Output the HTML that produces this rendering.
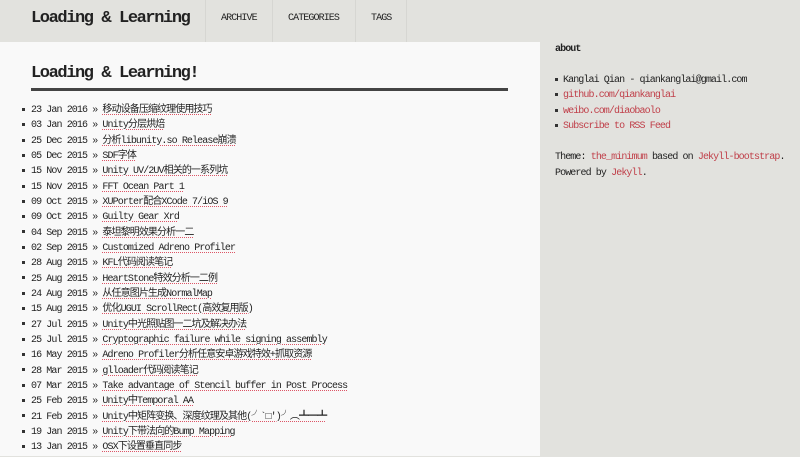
<!DOCTYPE html>
<html><head><meta charset="utf-8"><style>
body{margin:0;width:800px;height:456px;overflow:hidden;background:#e2e2de;font-family:"Liberation Mono","Noto Sans CJK SC",monospace;color:#222;font-size:10px;letter-spacing:-0.9px}
.hdr{position:absolute;left:0;top:0;width:800px;height:42px}
.brand{position:absolute;left:31px;top:9px;font-size:17px;letter-spacing:-1.4px;font-weight:bold;color:#222}
.nav{position:absolute;top:0;height:42px;border-left:1px solid #d6d6d2;}
.nav span{position:absolute;top:13px;font-size:10px}
.main{position:absolute;left:0;top:42px;width:540px;height:414px;background:#f9f9f9}
h1{position:absolute;left:31px;top:22px;margin:0;font-size:17px;letter-spacing:-1.4px;font-weight:bold}
.rule{position:absolute;left:31px;top:46px;width:477px;height:3px;background:#444}
ul{list-style:none;margin:0;padding:0}
.posts{position:absolute;left:22px;top:62px}
.posts li{height:15.33px;line-height:13px;white-space:nowrap}
li:before{content:"";display:inline-block;width:3px;height:3px;background:#333;vertical-align:middle;margin-right:6px}
.posts a{color:#222;text-decoration:underline dotted #d56;text-underline-offset:2px}
.side{position:absolute;left:555px;top:0}
.side b{position:absolute;top:44px;left:0;font-size:10px}
.side ul{position:absolute;top:74px;left:0}
.side li{height:15.33px;line-height:13px;white-space:nowrap}
.side li:before{margin-right:5px}
.r{color:#c0404a}
.theme{position:absolute;top:150px;left:0;white-space:nowrap;line-height:15.5px}
</style></head><body>
<div class="hdr">
<div class="brand">Loading &amp; Learning</div>
<div class="nav" style="left:205px;width:66px"><span style="left:15px">ARCHIVE</span></div>
<div class="nav" style="left:272px;width:83px"><span style="left:15px">CATEGORIES</span></div>
<div class="nav" style="left:355px;width:50px;border-right:1px solid #d6d6d2"><span style="left:15px">TAGS</span></div>
</div>
<div class="main">
<h1>Loading &amp; Learning!</h1>
<div class="rule"></div>
<ul class="posts">
<li>23 Jan 2016 » <a>移动设备压缩纹理使用技巧</a></li>
<li>03 Jan 2016 » <a>Unity分层烘焙</a></li>
<li>25 Dec 2015 » <a>分析libunity.so Release崩溃</a></li>
<li>05 Dec 2015 » <a>SDF字体</a></li>
<li>15 Nov 2015 » <a>Unity UV/2UV相关的一系列坑</a></li>
<li>15 Nov 2015 » <a>FFT Ocean Part 1</a></li>
<li>09 Oct 2015 » <a>XUPorter配合XCode 7/iOS 9</a></li>
<li>09 Oct 2015 » <a>Guilty Gear Xrd</a></li>
<li>04 Sep 2015 » <a>泰坦黎明效果分析一二</a></li>
<li>02 Sep 2015 » <a>Customized Adreno Profiler</a></li>
<li>28 Aug 2015 » <a>KFL代码阅读笔记</a></li>
<li>25 Aug 2015 » <a>HeartStone特效分析一二例</a></li>
<li>24 Aug 2015 » <a>从任意图片生成NormalMap</a></li>
<li>15 Aug 2015 » <a>优化UGUI ScrollRect(高效复用版)</a></li>
<li>27 Jul 2015 » <a>Unity中光照贴图一二坑及解决办法</a></li>
<li>25 Jul 2015 » <a>Cryptographic failure while signing assembly</a></li>
<li>16 May 2015 » <a>Adreno Profiler分析任意安卓游戏特效+抓取资源</a></li>
<li>28 Mar 2015 » <a>glloader代码阅读笔记</a></li>
<li>07 Mar 2015 » <a>Take advantage of Stencil buffer in Post Process</a></li>
<li>25 Feb 2015 » <a>Unity中Temporal AA</a></li>
<li>21 Feb 2015 » <a>Unity中矩阵变换、深度纹理及其他(╯`□′)╯︵┻━┻</a></li>
<li>19 Jan 2015 » <a>Unity下带法向的Bump Mapping</a></li>
<li>13 Jan 2015 » <a>OSX下设置垂直同步</a></li>
</ul>
</div>
<div class="side">
<b>about</b>
<ul>
<li>Kanglai Qian - qiankanglai@gmail.com</li>
<li class="r">github.com/qiankanglai</li>
<li class="r">weibo.com/diaobaolo</li>
<li class="r">Subscribe to RSS Feed</li>
</ul>
<div class="theme">Theme: <span class="r">the_minimum</span> based on <span class="r">Jekyll-bootstrap</span>.<br>Powered by <span class="r">Jekyll</span>.</div>
</div>
</body></html>
